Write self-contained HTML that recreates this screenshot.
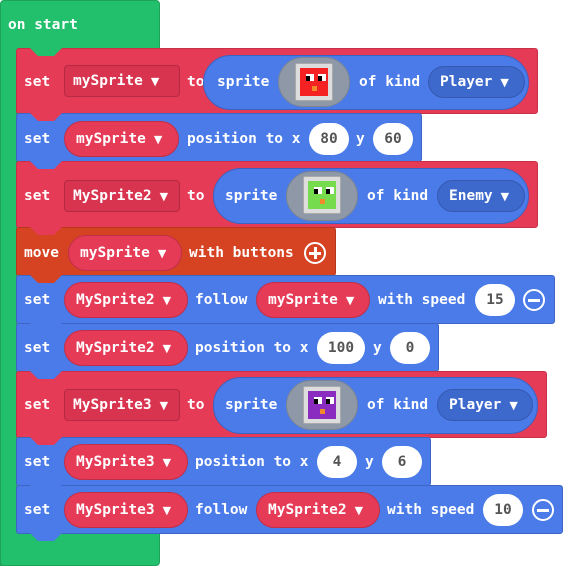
<!DOCTYPE html><html><head><style>
body{margin:0;width:563px;height:566px;background:#fff;position:relative;overflow:hidden;font-family:"DejaVu Sans Mono","Liberation Mono",monospace;font-weight:bold;font-size:14.5px;color:#fff}
div{position:absolute;box-sizing:border-box}
.g{background:#22bf6d;border:1px solid #1ea25c}
.r{background:#e63b57;border:1px solid #c8304a;border-radius:3px}
.bl{background:#4b7be8;border:1px solid #3d66c4;border-radius:3px}
.o{background:#d54322;border:1px solid #b5381c;border-radius:3px}
.t{white-space:nowrap;line-height:16px;margin-top:-8px}
.dd{background:#d8334f;border:1px solid #b62a44;border-radius:4px;display:flex;align-items:center;padding-left:8px;white-space:nowrap}
.ro{background:#e63b57;border:1px solid #c02e48;border-radius:18px;display:flex;align-items:center;padding-left:11px;white-space:nowrap}
.bo{background:#4b7be8;border:1px solid #3b63c0;border-radius:28px}
.db{background:#3e69cc;border:1px solid #3559b0;border-radius:16px;display:flex;align-items:center;padding-left:11px;white-space:nowrap}
.w{background:#fff;color:#555;border-radius:16px;display:flex;align-items:center;justify-content:center}
.gr{background:#8e98a6;border:1px solid #7c8594;border-radius:25px}
.tab{width:32px;height:8px;clip-path:polygon(0 0,100% 0,75% 100%,25% 100%)}
.c{border:2px solid #fff;border-radius:50%;width:22px;height:22px}
.sp{width:38px;height:38px;background:#ddd;border:1px solid #aaa;border-radius:2px}
.sp i{position:absolute;left:4px;top:4px;width:28px;height:28px}
.sp b{position:absolute;background:#fff;width:8px;height:7px;top:10px}
.sp b:after{content:"";position:absolute;left:0;top:2px;width:4px;height:5px;background:#000}
.sp u{position:absolute;left:16px;top:22px;width:5px;height:5px;background:#f08a2a}
s{text-decoration:none;font-size:11px;margin-left:8px;font-family:"DejaVu Sans",sans-serif}
</style></head><body>
<div class="g" style="left:0;top:0;width:160px;height:142px;border-radius:4px 4px 0 0"></div>
<div class="g" style="left:0;top:100px;width:17px;height:466px;border-top:none"></div>
<div class="g" style="left:0;top:532px;width:160px;height:34px;border-radius:0 0 4px 4px;border-top:none"></div>
<div class="t" style="left:8px;top:25px">on start</div>

<!-- row1 -->
<div class="r" style="left:16px;top:48px;width:522px;height:66px"></div>
<div class="tab" style="left:30px;top:48px;background:#22bf6d"></div>
<div class="t" style="left:24px;top:82px">set</div>
<div class="dd" style="left:64px;top:65px;width:116px;height:32px">mySprite<s>▼</s></div>
<div class="t" style="left:187px;top:82px">to</div>
<div class="bo" style="left:203px;top:55px;width:326px;height:55px"></div>
<div class="t" style="left:217px;top:82px">sprite</div>
<div class="gr" style="left:278px;top:57px;width:72px;height:50px"></div>
<div class="sp" style="left:295px;top:63px"><i style="background:#f42222"></i><b style="left:10px"></b><b style="left:22px"></b><u></u></div>
<div class="t" style="left:359px;top:82px">of kind</div>
<div class="db" style="left:428px;top:66px;width:97px;height:32px">Player<s>▼</s></div>

<!-- row2 -->
<div class="bl" style="left:16px;top:113px;width:406px;height:49px"></div>
<div class="tab" style="left:30px;top:113px;background:#e63b57"></div>
<div class="t" style="left:24px;top:139px">set</div>
<div class="ro" style="left:64px;top:121px;width:115px;height:36px">mySprite<s>▼</s></div>
<div class="t" style="left:187px;top:139px">position to x</div>
<div class="w" style="left:309px;top:123px;width:40px;height:32px">80</div>
<div class="t" style="left:356px;top:139px">y</div>
<div class="w" style="left:373px;top:123px;width:40px;height:32px">60</div>

<!-- row3 -->
<div class="r" style="left:16px;top:161px;width:522px;height:67px"></div>
<div class="tab" style="left:30px;top:161px;background:#4b7be8"></div>
<div class="t" style="left:24px;top:196px">set</div>
<div class="dd" style="left:64px;top:180px;width:116px;height:32px">MySprite2<s>▼</s></div>
<div class="t" style="left:187px;top:196px">to</div>
<div class="bo" style="left:213px;top:168px;width:316px;height:56px"></div>
<div class="t" style="left:225px;top:196px">sprite</div>
<div class="gr" style="left:286px;top:171px;width:72px;height:50px"></div>
<div class="sp" style="left:303px;top:176px"><i style="background:#76dc4e"></i><b style="left:10px"></b><b style="left:22px"></b><u></u></div>
<div class="t" style="left:367px;top:196px">of kind</div>
<div class="db" style="left:437px;top:180px;width:88px;height:32px">Enemy<s>▼</s></div>

<!-- row4 -->
<div class="o" style="left:16px;top:227px;width:320px;height:49px"></div>
<div class="tab" style="left:30px;top:227px;background:#e63b57"></div>
<div class="t" style="left:24px;top:253px">move</div>
<div class="ro" style="left:68px;top:235px;width:114px;height:36px">mySprite<s>▼</s></div>
<div class="t" style="left:189px;top:253px">with buttons</div>
<div class="c" style="left:304px;top:242px"></div>
<div style="left:309px;top:252px;width:12px;height:3px;background:#fff"></div>
<div style="left:314px;top:247px;width:3px;height:12px;background:#fff"></div>

<!-- row5 -->
<div class="bl" style="left:16px;top:275px;width:539px;height:49px"></div>
<div class="tab" style="left:30px;top:275px;background:#d54322"></div>
<div class="t" style="left:24px;top:300px">set</div>
<div class="ro" style="left:64px;top:282px;width:124px;height:36px">MySprite2<s>▼</s></div>
<div class="t" style="left:195px;top:300px">follow</div>
<div class="ro" style="left:256px;top:282px;width:114px;height:36px">mySprite<s>▼</s></div>
<div class="t" style="left:378px;top:300px">with speed</div>
<div class="w" style="left:475px;top:284px;width:40px;height:32px">15</div>
<div class="c" style="left:523px;top:289px"></div>
<div style="left:528px;top:299px;width:12px;height:3px;background:#fff"></div>

<!-- row6 -->
<div class="bl" style="left:16px;top:323px;width:423px;height:49px"></div>
<div class="tab" style="left:30px;top:323px;background:#4b7be8"></div>
<div class="t" style="left:24px;top:348px">set</div>
<div class="ro" style="left:64px;top:330px;width:124px;height:36px">MySprite2<s>▼</s></div>
<div class="t" style="left:195px;top:348px">position to x</div>
<div class="w" style="left:317px;top:332px;width:48px;height:32px">100</div>
<div class="t" style="left:373px;top:348px">y</div>
<div class="w" style="left:390px;top:332px;width:40px;height:32px">0</div>

<!-- row7 -->
<div class="r" style="left:16px;top:371px;width:531px;height:67px"></div>
<div class="tab" style="left:30px;top:371px;background:#4b7be8"></div>
<div class="t" style="left:24px;top:405px">set</div>
<div class="dd" style="left:64px;top:389px;width:116px;height:32px">MySprite3<s>▼</s></div>
<div class="t" style="left:187px;top:405px">to</div>
<div class="bo" style="left:213px;top:377px;width:325px;height:57px"></div>
<div class="t" style="left:225px;top:405px">sprite</div>
<div class="gr" style="left:286px;top:380px;width:72px;height:50px"></div>
<div class="sp" style="left:303px;top:386px"><i style="background:#8a2cc0"></i><b style="left:10px"></b><b style="left:22px"></b><u></u></div>
<div class="t" style="left:367px;top:405px">of kind</div>
<div class="db" style="left:437px;top:389px;width:96px;height:32px">Player<s>▼</s></div>

<!-- row8 -->
<div class="bl" style="left:16px;top:437px;width:415px;height:49px"></div>
<div class="tab" style="left:30px;top:437px;background:#e63b57"></div>
<div class="t" style="left:24px;top:462px">set</div>
<div class="ro" style="left:64px;top:444px;width:124px;height:36px">MySprite3<s>▼</s></div>
<div class="t" style="left:195px;top:462px">position to x</div>
<div class="w" style="left:317px;top:446px;width:40px;height:32px">4</div>
<div class="t" style="left:365px;top:462px">y</div>
<div class="w" style="left:382px;top:446px;width:40px;height:32px">6</div>

<!-- row9 -->
<div class="bl" style="left:16px;top:485px;width:547px;height:49px"></div>
<div class="tab" style="left:30px;top:485px;background:#4b7be8"></div>
<div class="tab" style="left:30px;top:533px;background:#4b7be8"></div>
<div class="t" style="left:24px;top:510px">set</div>
<div class="ro" style="left:64px;top:492px;width:124px;height:36px">MySprite3<s>▼</s></div>
<div class="t" style="left:195px;top:510px">follow</div>
<div class="ro" style="left:256px;top:492px;width:124px;height:36px">MySprite2<s>▼</s></div>
<div class="t" style="left:387px;top:510px">with speed</div>
<div class="w" style="left:483px;top:494px;width:40px;height:32px">10</div>
<div class="c" style="left:532px;top:499px"></div>
<div style="left:537px;top:509px;width:12px;height:3px;background:#fff"></div>
</body></html>
